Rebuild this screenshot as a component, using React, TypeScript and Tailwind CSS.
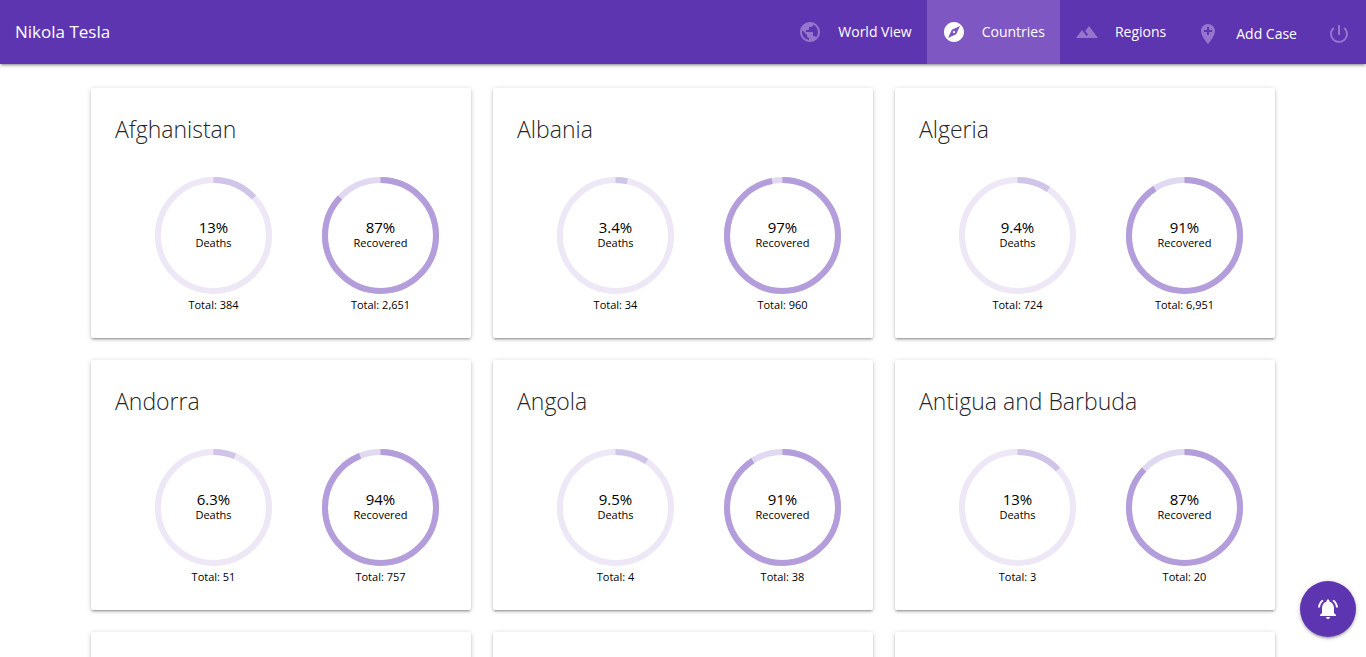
import type { ReactNode } from "react";
import {
  MdAddLocation,
  MdExplore,
  MdLandscape,
  MdNotificationsActive,
  MdPowerSettingsNew,
  MdPublic,
} from "react-icons/md";

type Stat = { percent: number; total: string };
type Country = { name: string; deaths: Stat; recovered: Stat };

const countries: Country[] = [
  { name: "Afghanistan", deaths: { percent: 13, total: "384" }, recovered: { percent: 87, total: "2,651" } },
  { name: "Albania", deaths: { percent: 3.4, total: "34" }, recovered: { percent: 97, total: "960" } },
  { name: "Algeria", deaths: { percent: 9.4, total: "724" }, recovered: { percent: 91, total: "6,951" } },
  { name: "Andorra", deaths: { percent: 6.3, total: "51" }, recovered: { percent: 94, total: "757" } },
  { name: "Angola", deaths: { percent: 9.5, total: "4" }, recovered: { percent: 91, total: "38" } },
  { name: "Antigua and Barbuda", deaths: { percent: 13, total: "3" }, recovered: { percent: 87, total: "20" } },
];

const pendingCards = ["a", "b", "c"];

const cardShadow =
  "shadow-[0_2px_2px_0_rgba(0,0,0,0.14),0_3px_1px_-2px_rgba(0,0,0,0.12),0_1px_5px_0_rgba(0,0,0,0.2)]";

function NavLink({ icon, label, active = false, low = false }: {
  icon: ReactNode;
  label: string;
  active?: boolean;
  low?: boolean;
}) {
  return (
    <a
      href="#"
      aria-current={active ? "page" : undefined}
      className={`flex h-16 items-center gap-4 px-[15px] text-sm whitespace-nowrap text-white ${
        active ? "bg-[#7e57c2]" : ""
      } ${low ? "pt-1" : ""}`}
    >
      <span className={active ? "text-white" : "text-[#9575cd]"}>{icon}</span>
      {label}
    </a>
  );
}

function Gauge({ label, stat, color, track }: { label: string; stat: Stat; color: string; track: string }) {
  return (
    <div className="flex flex-col items-center">
      <div className="grid size-[117px] place-items-center">
        <svg viewBox="0 0 117 117" className="col-start-1 row-start-1 size-full" aria-hidden="true">
          <g fill="none" strokeWidth="6" transform="rotate(-90 58.5 58.5)">
            <circle cx="58.5" cy="58.5" r="55.5" stroke={track} />
            <circle
              cx="58.5"
              cy="58.5"
              r="55.5"
              stroke={color}
              pathLength="100"
              strokeDasharray={`${stat.percent} ${100 - stat.percent}`}
            />
          </g>
        </svg>
        <div className="col-start-1 row-start-1 flex flex-col items-center pb-1">
          <span className="text-[15px] leading-[18px]">{`${stat.percent}%`}</span>
          <span className="text-[11px] leading-[14px]">{label}</span>
        </div>
      </div>
      <span className="mt-[2px] text-[11px] leading-[18px]">{`Total: ${stat.total}`}</span>
    </div>
  );
}

function CountryCard({ country }: { country: Country }) {
  return (
    <article className={`min-h-[250px] rounded-[2px] bg-white pt-6 ${cardShadow}`}>
      <h2 className="px-6 text-[23px] leading-[34px] font-light text-neutral-800">{country.name}</h2>
      <div className="mt-[31px] grid grid-cols-2 pr-[7px] pl-[39px]">
        <Gauge label="Deaths" stat={country.deaths} color="#d1c4e9" track="#ede7f6" />
        <Gauge label="Recovered" stat={country.recovered} color="#b39ddb" track="#e1d8f1" />
      </div>
    </article>
  );
}

export default function App() {
  return (
    <div className="flex h-screen flex-col bg-white font-['Open_Sans','Noto_Sans',sans-serif] text-black">
      <header className={`z-10 flex h-16 shrink-0 items-center justify-between bg-[#5e35b1] ${cardShadow}`}>
        <span className="px-[15px] text-[17px] text-white">Nikola Tesla</span>
        <nav className="flex">
          <NavLink icon={<MdPublic size={24} />} label="World View" />
          <NavLink icon={<MdExplore size={24} />} label="Countries" active />
          <NavLink icon={<MdLandscape size={24} />} label="Regions" />
          <NavLink icon={<MdAddLocation size={24} />} label="Add Case" low />
          <button type="button" aria-label="Log out" className="flex h-16 items-center px-[15px] pt-1 text-[#9575cd]">
            <MdPowerSettingsNew size={24} />
          </button>
        </nav>
      </header>
      <main className="flex-1 overflow-y-auto px-[91px] py-6 [scrollbar-width:none]">
        <div className="grid grid-cols-3 gap-[22px]">
          {countries.map((country) => (
            <CountryCard key={country.name} country={country} />
          ))}
          {pendingCards.map((id) => (
            <article key={id} className={`min-h-[250px] rounded-[2px] bg-white ${cardShadow}`} />
          ))}
        </div>
      </main>
      <button
        type="button"
        aria-label="Notifications"
        className={`fixed right-[10px] bottom-5 z-20 flex size-14 items-center justify-center rounded-full bg-[#5e35b1] text-white ${cardShadow}`}
      >
        <MdNotificationsActive size={24} />
      </button>
    </div>
  );
}
